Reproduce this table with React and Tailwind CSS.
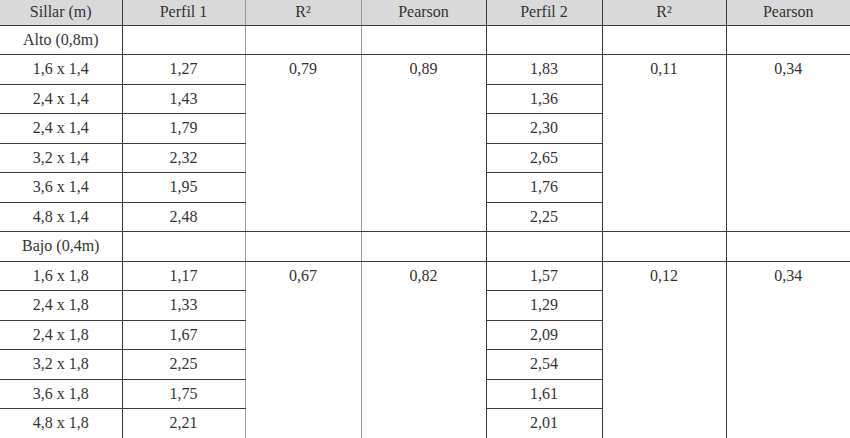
import React from 'react';

const headers = ['Sillar (m)', 'Perfil 1', 'R²', 'Pearson', 'Perfil 2', 'R²', 'Pearson'];

const groups = [
  {
    label: 'Alto (0,8m)',
    r1: '0,79', p1: '0,89', r2: '0,11', p2: '0,34',
    rows: [
      ['1,6 x 1,4', '1,27', '1,83'],
      ['2,4 x 1,4', '1,43', '1,36'],
      ['2,4 x 1,4', '1,79', '2,30'],
      ['3,2 x 1,4', '2,32', '2,65'],
      ['3,6 x 1,4', '1,95', '1,76'],
      ['4,8 x 1,4', '2,48', '2,25'],
    ],
  },
  {
    label: 'Bajo (0,4m)',
    r1: '0,67', p1: '0,82', r2: '0,12', p2: '0,34',
    rows: [
      ['1,6 x 1,8', '1,17', '1,57'],
      ['2,4 x 1,8', '1,33', '1,29'],
      ['2,4 x 1,8', '1,67', '2,09'],
      ['3,2 x 1,8', '2,25', '2,54'],
      ['3,6 x 1,8', '1,75', '1,61'],
      ['4,8 x 1,8', '2,21', '2,01'],
    ],
  },
];

const widths = [122, 123, 116, 125, 116, 124, 124];

// border helpers
const cell = 'border-b border-r border-[#3a3a3a] text-center align-middle p-0';
const soft = 'border-b border-r border-b-[#3a3a3a] border-r-[#9a9a9a] text-center p-0';
const last = 'border-b border-[#3a3a3a] text-center p-0';

// value that sits on the first line of a 6-row span
const Top = ({ children }) => (
  <div className="h-[28px] flex items-center justify-center">{children}</div>
);

function Group({ g }) {
  return (
    <>
      <tr className="h-[29.5px]">
        <td className={cell}>{g.label}</td>
        <td className={soft}></td>
        <td className={soft}></td>
        <td className={cell}></td>
        <td className={cell}></td>
        <td className={cell}></td>
        <td className={last}></td>
      </tr>
      {g.rows.map((r, i) => (
        <tr key={i} className="h-[29.5px]">
          <td className={cell}>{r[0]}</td>
          <td className={soft}>{r[1]}</td>
          {i === 0 && (
            <>
              <td rowSpan={6} className={`${soft} align-top`}><Top>{g.r1}</Top></td>
              <td rowSpan={6} className={`${cell} align-top`}><Top>{g.p1}</Top></td>
            </>
          )}
          <td className={cell}>{r[2]}</td>
          {i === 0 && (
            <>
              <td rowSpan={6} className={`${cell} align-top`}><Top>{g.r2}</Top></td>
              <td rowSpan={6} className={`${last} align-top`}><Top>{g.p2}</Top></td>
            </>
          )}
        </tr>
      ))}
    </>
  );
}

export default function App() {
  return (
    <div className="w-[850px] h-[438px] overflow-hidden bg-white">
      <table className="table-fixed border-collapse w-[850px] text-[#333] text-[16px] leading-normal font-['Liberation_Serif','Times_New_Roman',serif]">
        <colgroup>
          {widths.map((w, i) => (
            <col key={i} style={{ width: w }} />
          ))}
        </colgroup>
        <thead>
          <tr className="h-[25px] bg-[#d9d9d9]">
            {headers.map((h, i) => (
              <th
                key={i}
                className={`font-normal p-0 text-center border-b border-[#3a3a3a] ${i < 6 ? 'border-r' : ''} ${i === 1 || i === 2 ? 'border-r-[#9a9a9a]' : ''}`}
              >
                {h}
              </th>
            ))}
          </tr>
        </thead>
        <tbody>
          {groups.map((g, i) => (
            <Group key={i} g={g} />
          ))}
        </tbody>
      </table>
    </div>
  );
}
